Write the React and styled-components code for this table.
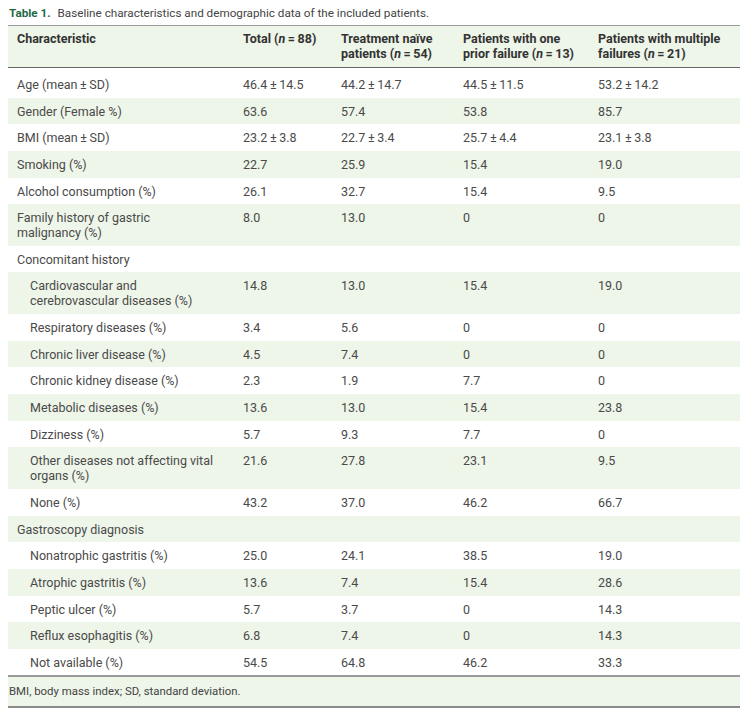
import styled, { createGlobalStyle } from "styled-components";

const GlobalStyle = createGlobalStyle`
  body {
    margin: 0;
    background: #fff;
    font-family: Roboto, "Liberation Sans", sans-serif;
  }
`;

const Page = styled.div`
  padding: 6px 9px 0 8px;
  width: 732px;
`;

const Caption = styled.div`
  font-size: 11.7px;
  line-height: 15px;
  color: #444;
  margin-bottom: 4px;
  padding-left: 1px;

  b {
    color: #1d6b45;
    font-weight: 700;
    margin-right: 4px;
  }
`;

const Table = styled.table`
  width: 732px;
  border-collapse: collapse;
  table-layout: fixed;
  font-size: 12.5px;
  line-height: 15px;
  color: #4a4a4a;
  border-top: 1.5px solid #9a9a9a;
  border-bottom: 2px solid #8a8a8a;
`;

const HeadCell = styled.th`
  background: #eef5e9;
  color: #333;
  font-weight: 700;
  text-align: left;
  vertical-align: top;
  padding: 5px 9px 6px 9px;
  border-bottom: 1.5px solid #666;
`;

const Row = styled.tr`
  background: ${(p) => (p.$shaded ? "#eef5e9" : "#fff")};
`;

const Cell = styled.td`
  vertical-align: top;
  padding: ${(p) => (p.$first ? "9px" : "6px")} 9px 5.65px 9px;
  padding-left: ${(p) => (p.$indent ? "22px" : "9px")};
`;

const LabelCell = styled(Cell)`
  padding-right: 20px;
`;

const FootRow = styled.tr`
  background: #eef5e9;
  border-top: 2px solid #9a9a9a;
`;

const FootCell = styled.td`
  font-size: 11.4px;
  color: #444;
  padding: 7px 9px 7px 1px;
`;

const NoWrap = styled.span`
  white-space: nowrap;

  i {
    font-style: italic;
  }
`;

const rows = [
  ["Age (mean\u2009±\u2009SD)", "46.4\u2009±\u200914.5", "44.2\u2009±\u200914.7", "44.5\u2009±\u200911.5", "53.2\u2009±\u200914.2"],
  ["Gender (Female %)", "63.6", "57.4", "53.8", "85.7"],
  ["BMI (mean\u2009±\u2009SD)", "23.2\u2009±\u20093.8", "22.7\u2009±\u20093.4", "25.7\u2009±\u20094.4", "23.1\u2009±\u20093.8"],
  ["Smoking (%)", "22.7", "25.9", "15.4", "19.0"],
  ["Alcohol consumption (%)", "26.1", "32.7", "15.4", "9.5"],
  ["Family history of gastric malignancy (%)", "8.0", "13.0", "0", "0"],
  ["Concomitant history", "", "", "", ""],
  ["Cardiovascular and cerebrovascular diseases (%)", "14.8", "13.0", "15.4", "19.0", true],
  ["Respiratory diseases (%)", "3.4", "5.6", "0", "0", true],
  ["Chronic liver disease (%)", "4.5", "7.4", "0", "0", true],
  ["Chronic kidney disease (%)", "2.3", "1.9", "7.7", "0", true],
  ["Metabolic diseases (%)", "13.6", "13.0", "15.4", "23.8", true],
  ["Dizziness (%)", "5.7", "9.3", "7.7", "0", true],
  ["Other diseases not affecting vital organs (%)", "21.6", "27.8", "23.1", "9.5", true],
  ["None (%)", "43.2", "37.0", "46.2", "66.7", true],
  ["Gastroscopy diagnosis", "", "", "", ""],
  ["Nonatrophic gastritis (%)", "25.0", "24.1", "38.5", "19.0", true],
  ["Atrophic gastritis (%)", "13.6", "7.4", "15.4", "28.6", true],
  ["Peptic ulcer (%)", "5.7", "3.7", "0", "14.3", true],
  ["Reflux esophagitis (%)", "6.8", "7.4", "0", "14.3", true],
  ["Not available (%)", "54.5", "64.8", "46.2", "33.3", true],
];

const NHeader = ({ label, n }) => (
  <HeadCell>
    {label}{" "}
    <NoWrap>
      (<i>n</i>
      {`\u2009=\u2009${n})`}
    </NoWrap>
  </HeadCell>
);

export default function App() {
  return (
    <Page>
      <GlobalStyle />
      <Caption>
        <b>Table 1.</b> Baseline characteristics and demographic data of the included patients.
      </Caption>
      <Table>
        <colgroup>
          <col style={{ width: 226 }} />
          <col style={{ width: 98 }} />
          <col style={{ width: 122 }} />
          <col style={{ width: 135 }} />
          <col style={{ width: 151 }} />
        </colgroup>
        <thead>
          <tr>
            <HeadCell>Characteristic</HeadCell>
            <NHeader label="Total" n="88" />
            <NHeader label="Treatment naïve patients" n="54" />
            <NHeader label="Patients with one prior failure" n="13" />
            <NHeader label="Patients with multiple failures" n="21" />
          </tr>
        </thead>
        <tbody>
          {rows.map((r, i) => (
            <Row key={i} $shaded={i % 2 === 1}>
              <LabelCell $first={i === 0} $indent={r[5]}>
                {r[0]}
              </LabelCell>
              {r.slice(1, 5).map((v, j) => (
                <Cell key={j} $first={i === 0}>
                  {v}
                </Cell>
              ))}
            </Row>
          ))}
          <FootRow>
            <FootCell colSpan={5}>BMI, body mass index; SD, standard deviation.</FootCell>
          </FootRow>
        </tbody>
      </Table>
    </Page>
  );
}
